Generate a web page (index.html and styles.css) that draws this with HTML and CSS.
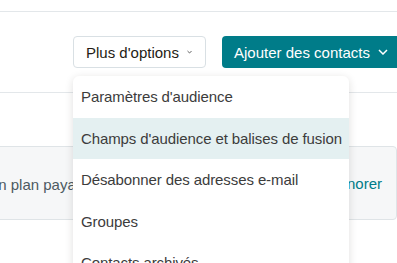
FILE: index.html
```html
<!DOCTYPE html>
<html lang="fr">
<head>
<meta charset="utf-8">
<link rel="stylesheet" href="styles.css">
</head>
<body>
<div class="page">
  <div class="topbar"></div>
  <div class="toolbar">
    <button class="btn btn-secondary">Plus d'options
      <svg class="chev" width="10" height="6" viewBox="0 0 10 6"><path d="M1 1l4 4 4-4" fill="none" stroke="currentColor" stroke-width="1.5"/></svg>
    </button>
    <button class="btn btn-primary">Ajouter des contacts
      <svg class="chev" width="10" height="6" viewBox="0 0 10 6"><path d="M1 1l4 4 4-4" fill="none" stroke="currentColor" stroke-width="1.5"/></svg>
    </button>
  </div>
  <div class="spacer"></div>
  <div class="banner">
    <span class="banner-text">Passez à un plan payant</span>
    <a class="banner-link">Ignorer</a>
  </div>
  <ul class="menu">
    <li class="item">Paramètres d'audience</li>
    <li class="item active">Champs d'audience et balises de fusion</li>
    <li class="item">Désabonner des adresses e-mail</li>
    <li class="item">Groupes</li>
    <li class="item">Contacts archivés</li>
  </ul>
</div>
</body>
</html>
```

FILE: styles.css
```css
* { box-sizing: border-box; }
html, body { margin: 0; padding: 0; }
body {
  background: #fff;
  font-family: "Liberation Sans", Arial, sans-serif;
  font-size: 15px;
  color: #241c15;
  width: 397px;
  height: 263px;
  overflow: hidden;
}
.page { position: relative; height: 263px; }
.topbar {
  height: 12px;
  border-bottom: 1px solid #e3e7ea;
}
.toolbar {
  display: flex;
  gap: 16px;
  padding: 24px 0 0 73px;
  height: 81px;
  border-bottom: 1px solid #e3e7ea;
  white-space: nowrap;
}
.btn {
  display: flex;
  align-items: center;
  gap: 8px;
  height: 32px;
  font: inherit;
  border-radius: 4px;
  flex: none;
  cursor: pointer;
}
.btn-secondary {
  background: #fff;
  color: #241c15;
  border: 1px solid #d9e0e4;
  padding: 0 13px 0 12px;
  width: 133px;
}
.btn-secondary .chev { color: #333; }
.btn-primary {
  background: #007c89;
  color: #fff;
  border: none;
  padding: 0 12px;
  width: 180px;
}
.spacer { height: 53px; }
.banner {
  display: flex;
  align-items: center;
  justify-content: space-between;
  margin-left: -20px;
  width: 417px;
  height: 74px;
  background: #f6f7f8;
  border: 1px solid #dfe4e7;
  border-radius: 4px;
  padding: 0 14px 0 0;
  white-space: nowrap;
}
.banner-text {
  color: #4d5a61;
  margin-top: 3px;
  margin-left: -57px;
}
.banner-link {
  color: #007c89;
}
.menu {
  position: absolute;
  left: 73px;
  top: 76px;
  width: 276px;
  margin: 0;
  padding: 0;
  list-style: none;
  background: #fff;
  border-radius: 6px;
  box-shadow: 0 2px 8px rgba(36, 28, 21, 0.14);
  overflow: hidden;
  height: 200px;
}
.item {
  height: 41.5px;
  display: flex;
  align-items: center;
  padding: 0 8px;
  color: #3c3c3c;
  white-space: nowrap;
  letter-spacing: -0.1px;
}
.item.active { background: #e4f0f1; }
```
